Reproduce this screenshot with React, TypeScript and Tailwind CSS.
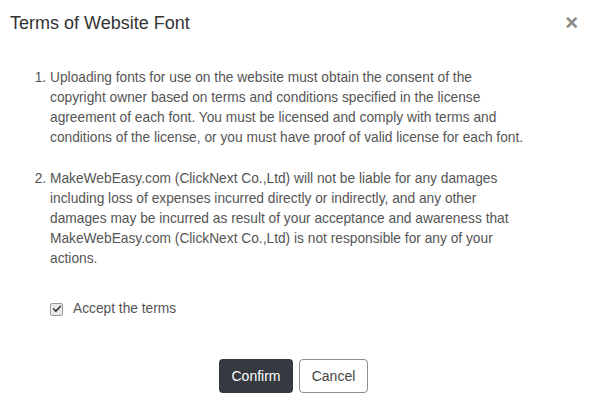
import { Check } from 'lucide-react';

const terms = [
  [
    'Uploading fonts for use on the website must obtain the consent of the',
    'copyright owner based on terms and conditions specified in the license',
    'agreement of each font. You must be licensed and comply with terms and',
    'conditions of the license, or you must have proof of valid license for each font.',
  ],
  [
    'MakeWebEasy.com (ClickNext Co.,Ltd) will not be liable for any damages',
    'including loss of expenses incurred directly or indirectly, and any other',
    'damages may be incurred as result of your acceptance and awareness that',
    'MakeWebEasy.com (ClickNext Co.,Ltd) is not responsible for any of your',
    'actions.',
  ],
];

export default function App() {
  return (
    <div className="w-[599px] h-[415px] bg-white text-[#333] font-['Liberation_Sans',Arial,sans-serif]">
      <div className="flex justify-between items-start pl-[10px] pr-[21px] pt-[12px] h-[46px]">
        <h4 className="text-[18px] leading-[22px]">Terms of Website Font</h4>
        <button className="mt-[1px] text-[#888] font-bold text-[22px] leading-[20px]">×</button>
      </div>

      <ol className="list-decimal pl-[50px] pr-[20px] mt-[22px] text-[13.75px] leading-[20px] text-[#555] whitespace-nowrap">
        {terms.map((lines, i) => (
          <li key={i} className={i === 0 ? 'mb-[21px]' : ''}>
            {lines.map((l, j) => (
              <span key={j}>
                {l}
                {j < lines.length - 1 && <br />}
              </span>
            ))}
          </li>
        ))}
      </ol>

      <label className="flex items-center gap-[10px] pl-[50px] mt-[30px] text-[13.75px] leading-[20px] text-[#555]">
        <span className="flex items-center justify-center w-[13px] h-[13px] rounded-[2px] border border-[#999] bg-[#e9e9e9]">
          <Check className="w-[10px] h-[10px] text-[#333]" strokeWidth={4} />
        </span>
        Accept the terms
      </label>

      <div className="flex justify-center gap-[6px] mt-[40px] pr-[12px]">
        <button className="w-[74px] h-[34px] rounded-[4px] bg-[#343a40] text-white text-[14px]">Confirm</button>
        <button className="w-[69px] h-[34px] rounded-[4px] border border-[#868e96] bg-white text-[#444] text-[14px]">Cancel</button>
      </div>
    </div>
  );
}
